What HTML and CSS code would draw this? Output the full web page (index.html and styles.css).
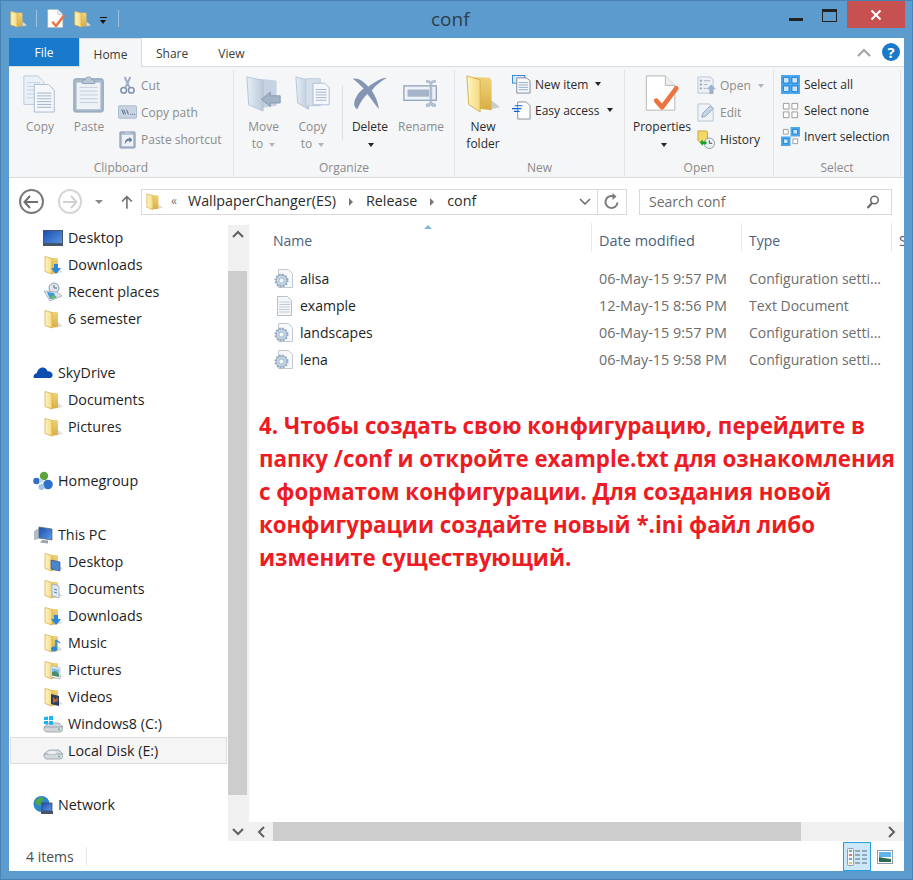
FILE: index.html
```html
<!DOCTYPE html>
<html lang="en">
<head>
    <meta charset="UTF-8">
    <meta name="viewport" content="width=device-width, initial-scale=1.0">
    <title>conf</title>
    <link rel="stylesheet" href="styles.css">
</head>
<body>

    <!-- Icon sheet -->
    <svg class="icon-sheet" xmlns="http://www.w3.org/2000/svg">
        <defs>
            <linearGradient id="flap" x1="0" y1="0" x2="1" y2="0"><stop offset="0" stop-color="#fff6c4"/><stop offset="1" stop-color="#f5d97f"/></linearGradient>
            <linearGradient id="back" x1="0" y1="0" x2="0" y2="1"><stop offset="0" stop-color="#f0d27a"/><stop offset="1" stop-color="#d9ae42"/></linearGradient>
            <linearGradient id="greyflap" x1="0" y1="0" x2="1" y2="0"><stop offset="0" stop-color="#e6edf5"/><stop offset="1" stop-color="#bccadb"/></linearGradient>
            <linearGradient id="screen" x1="0" y1="0" x2="1" y2="1"><stop offset="0" stop-color="#1c4fb0"/><stop offset="1" stop-color="#5d9be6"/></linearGradient>
        </defs>
        <symbol id="folder" viewBox="0 0 20 20">
            <path d="M15 13l5 4-5 1z" fill="#ddd"/>
            <path d="M5 3h9l1 1v14l-8 1z" fill="url(#back)"/>
            <path d="M2 1.500l7 2v15.500l-7-2.500z" fill="url(#flap)" stroke="#d6b04e" stroke-width=".8"/>
        </symbol>
        <symbol id="folder-down" viewBox="0 0 20 20">
            <use href="#folder"/>
            <path d="M11 9h4v4h3l-5 6-5-6h3z" fill="#2b87d8"/>
        </symbol>
        <symbol id="folder-desktop" viewBox="0 0 20 20">
            <use href="#folder"/>
            <path d="M8 8l9 2v9l-9-2z" fill="#4a86d0" stroke="#28538f" stroke-width=".7"/>
        </symbol>
        <symbol id="folder-docs" viewBox="0 0 20 20">
            <use href="#folder"/>
            <path d="M9 5l7 2v12l-7-2z" fill="#dfe8f2" stroke="#8fa3ba" stroke-width=".7"/>
            <path d="M11 10l3 1m-3 2l3 1" stroke="#5a7ea8"/>
        </symbol>
        <symbol id="folder-music" viewBox="0 0 20 20">
            <use href="#folder"/>
            <path d="M13 7v9" stroke="#2b87d8" stroke-width="1.600"/>
            <path d="M13 7l4 3" stroke="#2b87d8" stroke-width="1.200"/>
            <ellipse cx="11" cy="16" rx="3" ry="2.500" fill="#2b87d8"/>
        </symbol>
        <symbol id="folder-pics" viewBox="0 0 20 20">
            <use href="#folder"/>
            <path d="M8 6l9 2v11l-9-2z" fill="#e8f1f8" stroke="#a8b6c4" stroke-width=".7"/>
            <path d="M9 8l7 1.600v4l-7-1.600z" fill="#7cc0e8"/>
            <path d="M9 12l4-1 3 3v3l-7-1.500z" fill="#4d8a6b"/>
        </symbol>
        <symbol id="folder-videos" viewBox="0 0 20 20">
            <use href="#folder"/>
            <path d="M8 7l8 2v10l-8-2z" fill="#27405f"/>
            <path d="M10 10l4 4-4 2zM13 10l2 2-1 4z" fill="#d8662b"/>
        </symbol>
        <symbol id="recent" viewBox="0 0 20 20">
            <circle cx="11" cy="6" r="5" fill="#dfe6ee" stroke="#8b9aac"/>
            <path d="M11 3v3h3" fill="none" stroke="#5d6c7e"/>
            <path d="M1 9l13 1 5 4-12 5z" fill="#dce4ec" stroke="#94a2b2" stroke-width=".7"/>
            <path d="M4 10l7 1 2 5-6 1z" fill="#3f9bd0"/>
            <path d="M7 15l4-2 3 2-5 2z" fill="#6cb56a"/>
        </symbol>
        <symbol id="desktop" viewBox="0 0 20 20">
            <rect x=".5" y="2.500" width="19" height="15" fill="url(#screen)" stroke="#46566a"/>
            <rect x="1" y="15" width="18" height="2.500" fill="#46566a"/>
        </symbol>
        <symbol id="cloud" viewBox="0 0 20 20">
            <path d="M.5 14c0-2.200 1.500-3.700 3.300-3.700C4.600 6.500 7.300 4 10.500 4.600c2 .4 3.500 1.800 4.100 3.700 2.800-.4 5 1.500 5 3.800 0 1.700-1 2.900-2.300 2.900H3C1.500 15 .5 15 .5 14z" fill="#0c4fb0"/>
        </symbol>
        <symbol id="homegroup" viewBox="0 0 20 20">
            <circle cx="3.500" cy="10" r="3.300" fill="#2f6fc4"/>
            <circle cx="11" cy="5" r="4.200" fill="#5aa33f"/>
            <circle cx="15" cy="13.500" r="4.800" fill="#2d72c8"/>
            <circle cx="8.500" cy="16" r="3" fill="#9fc2e8"/>
            <circle cx="8" cy="10" r="2" fill="#c5d6e8"/>
        </symbol>
        <symbol id="pc" viewBox="0 0 20 20">
            <path d="M1 6l5-3v11l-5 1z" fill="#b5bcc6"/>
            <path d="M6 2l13 2v11L6 13z" fill="url(#screen)" stroke="#55606e" stroke-width=".7"/>
            <path d="M9 15l6 .6v3l-8-1z" fill="#9aa4b1"/>
        </symbol>
        <symbol id="drive-c" viewBox="0 0 20 20">
            <path d="M1 13l5-4h10l4 4v3l-2 2H3l-2-2z" fill="#cfd5da" stroke="#8d969f" stroke-width=".7"/>
            <path d="M1 13h19" stroke="#8d969f" stroke-width=".7"/>
            <circle cx="16" cy="15.500" r=".9" fill="#4fc04a"/>
            <path d="M1 3l4-.6v3.600H1zM6 2.300l4-.6V6H6zM1 7h4v3.500l-4-.5zM6 7h4v4l-4-.5z" fill="#19b5f0"/>
        </symbol>
        <symbol id="drive-e" viewBox="0 0 20 20">
            <path d="M1 13l5-4h10l4 4v3l-2 2H3l-2-2z" fill="#d5d9dd" stroke="#8d969f" stroke-width=".7"/>
            <path d="M1 13h19" stroke="#8d969f" stroke-width=".7"/>
            <ellipse cx="9" cy="11.500" rx="4.500" ry="1.500" fill="#eef0f2"/>
            <circle cx="16" cy="15.500" r=".9" fill="#4fc04a"/>
        </symbol>
        <symbol id="network" viewBox="0 0 20 20">
            <circle cx="8.500" cy="9" r="8" fill="#2e85c9"/>
            <path d="M3 5l5-3 3 2-3 3-1 4-4-2zM10 11l3 1-1 4-3-1z" fill="#55a83e"/>
            <rect x="9" y="8" width="10" height="8" fill="url(#screen)" stroke="#3a4658" stroke-width=".7"/>
            <path d="M8 16h12v3H8z" fill="#46566a"/>
        </symbol>
        <symbol id="file-ini" viewBox="0 0 20 20">
            <path d="M4.500 .5h10l4 4v14h-14z" fill="#f6f8fa" stroke="#c3c9d0"/>
            <circle cx="7.500" cy="11.500" r="5.500" fill="#c5d5e6" stroke="#8aa2bb"/>
            <circle cx="7.500" cy="11.500" r="2.600" fill="#f5f8fb" stroke="#8aa2bb" stroke-width=".7"/>
            <circle cx="7.500" cy="11.500" r="6.300" fill="none" stroke="#8aa2bb" stroke-width="1.400" stroke-dasharray="1.600 1.700"/>
        </symbol>
        <symbol id="file-txt" viewBox="0 0 20 20">
            <path d="M3.500 .5h10l4 4v15h-14z" fill="#f4f6f8" stroke="#b9c0c8"/>
            <path d="M5 6h11M5 8.500h11M5 11h11M5 13.500h11M5 16h11" stroke="#c3ccd6"/>
        </symbol>

        <!-- ribbon, large -->
        <symbol id="r-copy" viewBox="0 0 36 40">
            <path d="M1 1h15l6 6v24H1z" fill="#e9f0f7" stroke="#bccbdc"/>
            <path d="M4 8h14M4 12h14M4 16h14M4 20h14M4 24h14" stroke="#c6d3e2"/>
            <path d="M12 10h15l6 6v23H12z" fill="#f4f7fb" stroke="#a9bbd0"/>
            <path d="M15 19h15M15 22h15M15 25h15M15 28h15M15 31h15M15 34h15" stroke="#9fb0c5"/>
        </symbol>
        <symbol id="r-paste" viewBox="0 0 36 40">
            <rect x="2" y="4" width="31" height="35" rx="2" fill="#a9b8ca" stroke="#8a9bb0"/>
            <rect x="5" y="8" width="25" height="28" fill="#eef2f7"/>
            <path d="M8 13h19M8 17h19M8 21h19M8 25h19M8 29h19" stroke="#c0ccda"/>
            <path d="M11 7c0-2 3-2 3-2 0-4 7-4 7 0 0 0 3 0 3 2v2H11z" fill="#b9c6d6" stroke="#8a9bb0"/>
        </symbol>
        <symbol id="r-move" viewBox="0 0 40 40">
            <path d="M14 3l20 2v28l-20 3z" fill="#c6d2e2"/>
            <path d="M1 1l18 4v34L3 32z" fill="url(#greyflap)" stroke="#b4c2d4"/>
            <path d="M17 26l10-8v4h11v8H27v4z" fill="#a3b2c6" stroke="#8497ae"/>
        </symbol>
        <symbol id="r-copyto" viewBox="0 0 40 40">
            <path d="M1 1l14 4v32L3 30z" fill="url(#greyflap)" stroke="#b4c2d4"/>
            <path d="M12 3h16v30H12z" fill="#d4dee9" stroke="#bccbdc"/>
            <path d="M20 8h13l5 5v19H20z" fill="#f4f7fb" stroke="#a9bbd0"/>
            <path d="M23 15h12M23 18h12M23 21h12M23 24h12M23 27h12" stroke="#9fb0c5"/>
        </symbol>
        <symbol id="r-delete" viewBox="0 0 40 38">
            <path d="M1 2c6-1 12 3 17 9C25 6 32 1 39 1c-6 3-13 9-17 14 4 6 7 13 8 21-5-6-9-12-13-17C11 25 8 31 6 36 2 34 1 28 5 22c2-4 5-7 8-9C9 9 5 5 1 2z" fill="#8495b3"/>
        </symbol>
        <symbol id="r-rename" viewBox="0 0 40 32">
            <rect x="1" y="7" width="36" height="16" fill="#eef3f9" stroke="#92a5bd" stroke-width="1.500"/>
            <rect x="5" y="11" width="24" height="8" fill="#a5b4c8"/>
            <path d="M26 1c3 0 4 0 5 2 1-2 2-2 5-2v2c-3 0-4 1-4 2v20c0 1 1 2 4 2v3c-3 0-4 0-5-2-1 2-2 2-5 2v-3c3 0 4-1 4-2V5c0-1-1-2-4-2z" fill="#b7c4d5" stroke="#8fa2ba" stroke-width=".6"/>
        </symbol>
        <symbol id="r-newfolder" viewBox="0 0 36 40">
            <path d="M26 26l10 8-10 2z" fill="#ccc"/>
            <path d="M8 2l17 1 2 3v31l-17-2z" fill="url(#back)"/>
            <path d="M1 1l14 4v34L3 31z" fill="url(#flap)" stroke="#d6b04e"/>
        </symbol>
        <symbol id="r-props" viewBox="0 0 36 40">
            <path d="M1.500 1h20l10 10v26h-30z" fill="#fff" stroke="#b5b5b5"/>
            <path d="M21.500 1v10h10" fill="#eee" stroke="#b5b5b5"/>
            <path d="M12 27l6 7 15-20" fill="none" stroke="#ed7441" stroke-width="5" stroke-linecap="round" stroke-linejoin="round"/>
        </symbol>

        <!-- ribbon, small -->
        <symbol id="s-cut" viewBox="0 0 18 20">
            <path d="M6 1l5 11M12 1L7 12" stroke="#9fb0c5" stroke-width="2.200" fill="none"/>
            <circle cx="5" cy="15" r="3" fill="none" stroke="#7f93ad" stroke-width="1.600"/>
            <circle cx="13" cy="15" r="3" fill="none" stroke="#7f93ad" stroke-width="1.600"/>
        </symbol>
        <symbol id="s-path" viewBox="0 0 20 16">
            <rect x=".5" y="1" width="19" height="13" rx="1" fill="#c9d4e3" stroke="#a8b8cc"/>
            <path d="M4 5l2 5M6 5l2 5M9 5l2 5" stroke="#55657c" fill="none"/>
            <path d="M13 10h1M15 10h1M17 10h1" stroke="#55657c"/>
        </symbol>
        <symbol id="s-pasteshort" viewBox="0 0 18 20">
            <rect x="1" y="2" width="16" height="17" rx="1" fill="#a9b8ca" stroke="#8a9bb0"/>
            <rect x="3" y="5" width="12" height="12" fill="#eef2f7"/>
            <path d="M6 2h6v3H6z" fill="#b9c6d6"/>
            <path d="M6 15c0-4 2-6 5-6V7l3 3.500-3 3V11c-2 0-3 1-5 4z" fill="#5f7594"/>
        </symbol>
        <symbol id="s-newitem" viewBox="0 0 20 20">
            <rect x=".5" y=".5" width="13" height="8" fill="#dceafa" stroke="#2e86de"/>
            <path d="M5 3h10l4 3v13H5z" fill="#f7f9fb" stroke="#7c8a99"/>
            <path d="M7 8h10M7 10.500h10M7 13h10M7 15.500h10" stroke="#8fa9c4"/>
        </symbol>
        <symbol id="s-easy" viewBox="0 0 20 20">
            <path d="M6 1h9l4 4v14H6z" fill="#fdfdfd" stroke="#8a8f96"/>
            <path d="M3 5h8M0 8h10M2 11h6" stroke="#0a63d6" stroke-width="1.300"/>
        </symbol>
        <symbol id="s-open" viewBox="0 0 20 20">
            <path d="M1 1h13l3 3v14H1z" fill="#eef2f7" stroke="#b7c4d5"/>
            <path d="M3 4h2v2H3zM3 8h2v2H3zM3 12h2v2H3z" fill="#8aa0bb"/>
            <path d="M7 5h7M7 9h4M7 13h3" stroke="#9fb0c5"/>
            <path d="M10 14l5-5 5 5h-3v5h-4v-5z" fill="#9db1ca"/>
        </symbol>
        <symbol id="s-edit" viewBox="0 0 20 20">
            <path d="M1 1h12l4 4v14H1z" fill="#f0f4f9" stroke="#b7c4d5"/>
            <path d="M5 15l1-4 8-8 3 3-8 8z" fill="#c6d6e9" stroke="#8ea3bd"/>
        </symbol>
        <symbol id="s-history" viewBox="0 0 20 20">
            <path d="M1 1h9l1 1v12H4l-3-3z" fill="#f4d766" stroke="#c9a53c"/>
            <circle cx="13" cy="14" r="5.500" fill="#eef1f4" stroke="#8e98a3"/>
            <path d="M13 11v3h3" fill="none" stroke="#444"/>
            <path d="M3 13l3-3v2h4v3H6v2z" fill="#17a126"/>
        </symbol>
        <symbol id="s-all" viewBox="0 0 20 20">
            <rect width="20" height="20" fill="#4aa7f0"/>
            <path d="M2.500 2.500h6v6h-6zM11.500 2.500h6v6h-6zM2.500 11.500h6v6h-6zM11.500 11.500h6v6h-6z" fill="#cbe6fb" stroke="#1a7fd0"/>
        </symbol>
        <symbol id="s-none" viewBox="0 0 20 20">
            <path d="M2.500 2.500h6v6h-6zM11.500 2.500h6v6h-6zM2.500 11.500h6v6h-6zM11.500 11.500h6v6h-6z" fill="#fff" stroke="#9a9a9a"/>
        </symbol>
        <symbol id="s-invert" viewBox="0 0 20 20">
            <path d="M10 0h10v10H10zM0 10h10v10H0z" fill="#4aa7f0"/>
            <path d="M12.500 2.500h5v5h-5zM2.500 12.500h5v5h-5z" fill="#cbe6fb" stroke="#1a7fd0"/>
            <path d="M2.500 2.500h5v5h-5zM12.500 12.500h5v5h-5z" fill="#fff" stroke="#9a9a9a"/>
        </symbol>
    </svg>

    <div class="window">

        <!-- Title bar -->
        <header class="titlebar">
            <div class="qat">
                <svg class="ico-tree"><use href="#folder"/></svg>
                <span class="qat-sep"></span>
                <svg class="ico-tree"><use href="#r-props"/></svg>
                <svg class="ico-tree"><use href="#folder"/></svg>
                <span class="qat-drop"></span>
                <span class="qat-sep"></span>
            </div>
            <h1 class="title">conf</h1>
            <div class="win-controls">
                <span class="win-min"></span>
                <span class="win-max"></span>
                <span class="win-close">
                    <svg width="12" height="12" viewBox="0 0 12 12"><path d="M1.500 1.500l9 9M10.500 1.500l-9 9" stroke="#fff" stroke-width="2"/></svg>
                </span>
            </div>
        </header>

        <div class="content">

            <!-- Ribbon tabs -->
            <nav class="tabs">
                <span class="tab-file">File</span>
                <span class="tab tab-active">Home</span>
                <span class="tab tab-share">Share</span>
                <span class="tab tab-view">View</span>
                <span class="tabs-right">
                    <svg width="14" height="9" viewBox="0 0 14 9"><path d="M1 8l6-6 6 6" fill="none" stroke="#a5a5a5" stroke-width="2.200"/></svg>
                    <span class="help">?</span>
                </span>
            </nav>

            <!-- Ribbon -->
            <section class="ribbon">

                <div class="group group-clipboard">
                    <div class="group-body">
                        <div class="big off btn-copy"><svg class="ico-big"><use href="#r-copy"/></svg><span>Copy</span></div>
                        <div class="big off btn-paste"><svg class="ico-big"><use href="#r-paste"/></svg><span>Paste</span></div>
                        <div class="small-col">
                            <div class="small off"><svg class="ico-small"><use href="#s-cut"/></svg>Cut</div>
                            <div class="small off"><svg class="ico-small"><use href="#s-path"/></svg>Copy path</div>
                            <div class="small off"><svg class="ico-small"><use href="#s-pasteshort"/></svg>Paste shortcut</div>
                        </div>
                    </div>
                    <div class="group-label">Clipboard</div>
                </div>

                <div class="group group-organize">
                    <div class="group-body">
                        <div class="big off btn-move"><svg class="ico-big"><use href="#r-move"/></svg><span>Move<br>to <i class="caret caret-off"></i></span></div>
                        <div class="big off btn-move"><svg class="ico-big"><use href="#r-copyto"/></svg><span>Copy<br>to <i class="caret caret-off"></i></span></div>
                        <div class="divider"></div>
                        <div class="big btn-delete"><svg class="ico-big"><use href="#r-delete"/></svg><span>Delete<br><i class="caret"></i></span></div>
                        <div class="big off btn-rename"><svg class="ico-big"><use href="#r-rename"/></svg><span>Rename</span></div>
                    </div>
                    <div class="group-label">Organize</div>
                </div>

                <div class="group group-new">
                    <div class="group-body">
                        <div class="big btn-newfolder"><svg class="ico-big"><use href="#r-newfolder"/></svg><span>New<br>folder</span></div>
                        <div class="small-col tight">
                            <div class="small"><svg class="ico-small"><use href="#s-newitem"/></svg>New item <i class="caret"></i></div>
                            <div class="small"><svg class="ico-small"><use href="#s-easy"/></svg>Easy access <i class="caret"></i></div>
                        </div>
                    </div>
                    <div class="group-label">New</div>
                </div>

                <div class="group group-open">
                    <div class="group-body">
                        <div class="big btn-props"><svg class="ico-big"><use href="#r-props"/></svg><span>Properties<br><i class="caret"></i></span></div>
                        <div class="small-col">
                            <div class="small off"><svg class="ico-small"><use href="#s-open"/></svg>Open <i class="caret caret-off"></i></div>
                            <div class="small off"><svg class="ico-small"><use href="#s-edit"/></svg>Edit</div>
                            <div class="small"><svg class="ico-small"><use href="#s-history"/></svg>History</div>
                        </div>
                    </div>
                    <div class="group-label">Open</div>
                </div>

                <div class="group group-select">
                    <div class="group-body">
                        <div class="small-col tight">
                            <div class="small"><svg class="ico-small"><use href="#s-all"/></svg>Select all</div>
                            <div class="small"><svg class="ico-small"><use href="#s-none"/></svg>Select none</div>
                            <div class="small"><svg class="ico-small"><use href="#s-invert"/></svg>Invert selection</div>
                        </div>
                    </div>
                    <div class="group-label">Select</div>
                </div>
            </section>

            <!-- Navigation bar -->
            <div class="navbar">
                <span class="nav-circle">
                    <svg width="16" height="14" viewBox="0 0 16 14"><path d="M7 1L1.500 7 7 13M2 7h13" fill="none" stroke="#6e6e6e" stroke-width="2"/></svg>
                </span>
                <span class="nav-circle nav-off">
                    <svg width="16" height="14" viewBox="0 0 16 14"><path d="M9 1l5.500 6L9 13M14 7H1" fill="none" stroke="#d0d0d0" stroke-width="2"/></svg>
                </span>
                <span class="nav-drop"></span>
                <svg class="nav-up" width="12" height="14" viewBox="0 0 12 14"><path d="M1 6.500L6 1.500l5 5M6 2v12" fill="none" stroke="#6e6e6e" stroke-width="1.600"/></svg>
                <div class="address">
                    <svg class="ico-addr"><use href="#folder"/></svg>
                    <span class="crumb-more">«</span>
                    <span class="crumb">WallpaperChanger(ES)</span>
                    <i class="crumb-arrow"></i>
                    <span class="crumb">Release</span>
                    <i class="crumb-arrow"></i>
                    <span class="crumb">conf</span>
                    <svg class="addr-chevron" width="12" height="7" viewBox="0 0 12 7"><path d="M1 1l5 5 5-5" fill="none" stroke="#6a6a6a" stroke-width="1.500"/></svg>
                    <span class="addr-refresh">
                        <svg width="16" height="17" viewBox="0 0 16 17"><path d="M13.500 9.500a6 6 0 1 1-4-6.200" fill="none" stroke="#7a7a7a" stroke-width="2"/><path d="M8.500 0v7l4-3.500z" fill="#7a7a7a"/></svg>
                    </span>
                </div>
                <div class="search">
                    <span>Search conf</span>
                    <svg width="14" height="14" viewBox="0 0 14 14"><circle cx="8.500" cy="5" r="3.800" fill="none" stroke="#6a6a6a" stroke-width="1.500"/><path d="M6 8l-4.500 5" stroke="#6a6a6a" stroke-width="2.200"/></svg>
                </div>
            </div>

            <!-- Main area -->
            <div class="main">
                <aside class="sidebar">
                    <ul class="tree">
                        <li class="sub"><svg class="ico-tree"><use href="#desktop"/></svg>Desktop</li>
                        <li class="sub"><svg class="ico-tree"><use href="#folder-down"/></svg>Downloads</li>
                        <li class="sub"><svg class="ico-tree"><use href="#recent"/></svg>Recent places</li>
                        <li class="sub"><svg class="ico-tree"><use href="#folder"/></svg>6 semester</li>
                        <li class="gap"></li>
                        <li><svg class="ico-tree"><use href="#cloud"/></svg>SkyDrive</li>
                        <li class="sub"><svg class="ico-tree"><use href="#folder"/></svg>Documents</li>
                        <li class="sub"><svg class="ico-tree"><use href="#folder"/></svg>Pictures</li>
                        <li class="gap"></li>
                        <li><svg class="ico-tree"><use href="#homegroup"/></svg>Homegroup</li>
                        <li class="gap"></li>
                        <li><svg class="ico-tree"><use href="#pc"/></svg>This PC</li>
                        <li class="sub"><svg class="ico-tree"><use href="#folder-desktop"/></svg>Desktop</li>
                        <li class="sub"><svg class="ico-tree"><use href="#folder-docs"/></svg>Documents</li>
                        <li class="sub"><svg class="ico-tree"><use href="#folder-down"/></svg>Downloads</li>
                        <li class="sub"><svg class="ico-tree"><use href="#folder-music"/></svg>Music</li>
                        <li class="sub"><svg class="ico-tree"><use href="#folder-pics"/></svg>Pictures</li>
                        <li class="sub"><svg class="ico-tree"><use href="#folder-videos"/></svg>Videos</li>
                        <li class="sub"><svg class="ico-tree"><use href="#drive-c"/></svg>Windows8 (C:)</li>
                        <li class="sub selected"><svg class="ico-tree"><use href="#drive-e"/></svg>Local Disk (E:)</li>
                        <li class="gap"></li>
                        <li><svg class="ico-tree"><use href="#network"/></svg>Network</li>
                    </ul>
                </aside>

                <div class="vscroll">
                    <span class="sb-btn"><svg width="12" height="8" viewBox="0 0 12 8"><path d="M1 7l5-5 5 5" fill="none" stroke="#606060" stroke-width="2"/></svg></span>
                    <span class="vscroll-thumb"></span>
                    <span class="sb-btn"><svg width="12" height="8" viewBox="0 0 12 8"><path d="M1 1l5 5 5-5" fill="none" stroke="#606060" stroke-width="2"/></svg></span>
                </div>

                <div class="pane">
                    <div class="files">
                        <div class="file-head">
                            <span class="col-name">Name<i class="sort-arrow"></i></span>
                            <span class="col-date">Date modified</span>
                            <span class="col-type">Type</span>
                            <span class="col-size">S</span>
                        </div>
                        <div class="file-row">
                            <span class="col-name"><svg class="ico-file"><use href="#file-ini"/></svg>alisa</span>
                            <span class="col-date">06-May-15 9:57 PM</span>
                            <span class="col-type">Configuration setti...</span>
                        </div>
                        <div class="file-row">
                            <span class="col-name"><svg class="ico-file"><use href="#file-txt"/></svg>example</span>
                            <span class="col-date">12-May-15 8:56 PM</span>
                            <span class="col-type">Text Document</span>
                        </div>
                        <div class="file-row">
                            <span class="col-name"><svg class="ico-file"><use href="#file-ini"/></svg>landscapes</span>
                            <span class="col-date">06-May-15 9:57 PM</span>
                            <span class="col-type">Configuration setti...</span>
                        </div>
                        <div class="file-row">
                            <span class="col-name"><svg class="ico-file"><use href="#file-ini"/></svg>lena</span>
                            <span class="col-date">06-May-15 9:58 PM</span>
                            <span class="col-type">Configuration setti...</span>
                        </div>

                        <p class="note">4. Чтобы создать свою конфигурацию, перейдите в папку /conf и откройте example.txt для ознакомления с форматом конфигурации. Для создания новой конфигурации создайте новый *.ini файл либо измените существующий.</p>
                    </div>

                    <div class="hscroll">
                        <span class="sb-btn"><svg width="8" height="12" viewBox="0 0 8 12"><path d="M7 1L2 6l5 5" fill="none" stroke="#606060" stroke-width="2"/></svg></span>
                        <span class="hscroll-thumb"></span>
                        <span class="sb-btn"><svg width="8" height="12" viewBox="0 0 8 12"><path d="M1 1l5 5-5 5" fill="none" stroke="#606060" stroke-width="2"/></svg></span>
                    </div>
                </div>
            </div>

            <!-- Status bar -->
            <footer class="statusbar">
                <span class="status-count">4 items</span>
                <div class="view-btns">
                    <span class="view-btn view-on">
                        <svg width="20" height="18" viewBox="0 0 20 18">
                            <rect x=".5" y=".5" width="6" height="17" rx="1" fill="#f2f4f6" stroke="#8e9cab"/>
                            <path d="M2 3h3" stroke="#4aa54a" stroke-width="1.500"/><path d="M2 7h3" stroke="#d84c4c" stroke-width="1.500"/><path d="M2 11h3" stroke="#4a7fd0" stroke-width="1.500"/><path d="M2 15h3" stroke="#c8c83a" stroke-width="1.500"/>
                            <path d="M8 3h5M15 3h5M8 7h5M15 7h5M8 11h5M15 11h5M8 15h5M15 15h5" stroke="#5a6a78"/>
                        </svg>
                    </span>
                    <span class="view-btn">
                        <svg width="16" height="14" viewBox="0 0 16 14">
                            <rect x=".5" y=".5" width="15" height="13" fill="#fff" stroke="#8e9cab"/>
                            <rect x="2" y="2" width="12" height="5" fill="#5fb4ea"/>
                            <path d="M2 7l5 1 7 1v3H2z" fill="#2d6b4f"/>
                        </svg>
                    </span>
                </div>
            </footer>
        </div>
    </div>

</body>
</html>
```

FILE: styles.css
```css
* {
    box-sizing: border-box;
}

body {
    margin: 0;
    font-family: "Open Sans", "Noto Sans", sans-serif;
    font-size: 14px;
    color: #1e1e1e;
}

/* only holds the symbols, takes no room on the page */
.icon-sheet {
    position: absolute;
    width: 0;
    height: 0;
}

.window {
    width: 913px;
    height: 880px;
    display: flex;
    flex-direction: column;
    padding: 0 8px 8px;
    background: #5c9bce;
    border: 1px solid #4a83b2;
    overflow: hidden;
}

/* Title bar */
.titlebar {
    height: 37px;
    flex: none;
    display: flex;
    align-items: flex-start;
}

.qat {
    display: flex;
    align-items: center;
    height: 37px;
    width: 300px;
    padding-bottom: 2px;
}

.qat .ico-tree {
    width: 18px;
    height: 20px;
    margin-right: 8px;
}

.qat-sep {
    width: 1px;
    height: 17px;
    background: #9dc1de;
    margin: 0 10px 0 1px;
}

.qat-drop {
    width: 7px;
    height: 6px;
    margin: 2px 10px 0 1px;
    border-top: 1px solid #111;
    position: relative;
}

.qat-drop::after {
    content: "";
    position: absolute;
    left: 0;
    top: 2px;
    border: 3.500px solid transparent;
    border-top: 4px solid #111;
    border-bottom: 0;
}

.title {
    flex: 1;
    margin: 0;
    padding: 5px 0 0 122px;
    font-size: 19px;
    font-weight: 400;
    line-height: 26px;
    color: #2f3d4a;
}

.win-controls {
    display: flex;
    align-items: flex-start;
    margin-right: -1px;
}

.win-min {
    width: 14px;
    height: 3px;
    margin: 17px 19px 0 0;
    background: #222;
}

.win-max {
    width: 15px;
    height: 13px;
    margin: 8px 10px 0 0;
    border: 1px solid #222;
    border-top-width: 3px;
}

.win-close {
    width: 58px;
    height: 27px;
    background: #c75050;
    display: flex;
    align-items: center;
    justify-content: center;
}

.content {
    flex: 1;
    min-height: 0;
    display: flex;
    flex-direction: column;
    background: #fff;
}

/* Ribbon tabs */
.tabs {
    height: 29px;
    flex: none;
    display: flex;
    align-items: stretch;
    font-size: 12px;
    color: #3b3b3b;
    border-bottom: 1px solid #dadbdc;
}

.tab-file {
    width: 70px;
    background: #1979ca;
    color: #fff;
    display: flex;
    align-items: center;
    justify-content: center;
}

.tab {
    display: flex;
    align-items: center;
    padding-top: 3px;
}

.tab-active {
    width: 63px;
    justify-content: center;
    background: #f5f6f7;
    border: 1px solid #dadbdc;
    border-bottom: 0;
    margin-bottom: -1px;
}

.tab-share {
    margin-left: 14px;
}

.tab-view {
    margin-left: 30px;
}

.tabs-right {
    margin-left: auto;
    display: flex;
    align-items: center;
    gap: 11px;
    padding: 0 4px 0 0;
}

.help {
    width: 18px;
    height: 18px;
    border-radius: 50%;
    background: #1979ca;
    color: #fff;
    font-weight: 700;
    font-size: 15px;
    line-height: 18px;
    text-align: center;
}

/* Ribbon */
.ribbon {
    height: 111px;
    flex: none;
    display: flex;
    background: #f5f6f7;
    border-bottom: 1px solid #dadbdc;
    font-size: 12px;
    color: #2b2b2b;
    padding-top: 3px;
}

.group {
    display: flex;
    flex-direction: column;
    border-right: 1px solid #e2e3e4;
    margin-bottom: 1px;
}

.group-body {
    flex: 1;
    display: flex;
    align-items: flex-start;
}

.group-label {
    height: 16px;
    text-align: center;
    line-height: 16px;
    color: #8a8a8a;
}

.group-clipboard { width: 225px; }
.group-organize { width: 221px; }
.group-new { width: 170px; }
.group-open { width: 149px; }
.group-select { width: 127px; }

.group-clipboard .group-body { padding-left: 8px; }
.group-organize .group-body { padding-left: 5px; }
.group-new .group-body { padding-left: 3px; }
.group-open .group-body { padding-left: 4px; }
.group-select .group-body { padding-left: 7px; }

.big {
    display: flex;
    flex-direction: column;
    align-items: center;
    text-align: center;
    line-height: 17px;
    padding-top: 5px;
}

.big span {
    white-space: nowrap;
    margin-top: 5px;
}

.ico-big {
    width: 36px;
    height: 38px;
}

.off {
    color: #8c8c8c;
}

.btn-copy { width: 46px; }
.btn-paste { width: 52px; }
.btn-move { width: 49px; }
.btn-delete { width: 50px; margin-left: 2px; }
.btn-rename { width: 52px; }
.btn-newfolder { width: 50px; }
.btn-props { width: 66px; }

.divider {
    width: 1px;
    height: 55px;
    margin: 15px 0 0 5px;
    background: #dfe0e1;
}

.small-col {
    display: flex;
    flex-direction: column;
    padding-top: 2px;
    margin-left: 3px;
}

.group-new .small-col {
    margin-left: 4px;
}

.group-open .small-col {
    margin-left: 2px;
}

.group-select .small-col {
    margin-left: 0;
}

.small {
    height: 27px;
    display: flex;
    align-items: center;
    white-space: nowrap;
}

.small .caret {
    margin-left: 7px;
}

.tight {
    padding-top: 1px;
}

.tight .small {
    height: 26px;
}

.ico-small {
    width: 19px;
    height: 19px;
    margin-right: 4px;
    flex: none;
}

.caret {
    display: inline-block;
    vertical-align: middle;
    margin-left: 3px;
    border: 3.500px solid transparent;
    border-top: 4px solid #222;
    border-bottom: 0;
}

.caret-off {
    border-top-color: #b5b5b5;
}

/* Navigation bar */
.navbar {
    height: 45px;
    flex: none;
    display: flex;
    align-items: center;
    padding: 2px 12px 0 10px;
    color: #2b2b2b;
}

.nav-circle {
    width: 25px;
    height: 25px;
    border: 2px solid #7a7a7a;
    border-radius: 50%;
    display: flex;
    align-items: center;
    justify-content: center;
    margin-right: 14px;
}

.nav-off {
    border-color: #d6d6d6;
    margin-right: 13px;
}

.nav-drop {
    border: 4px solid transparent;
    border-top: 4px solid #8a8a8a;
    border-bottom: 0;
    margin-right: 18px;
}

.nav-up {
    margin-right: 8px;
}

.address {
    width: 486px;
    height: 26px;
    flex: none;
    display: flex;
    align-items: center;
    border: 1px solid #d9d9d9;
    padding-left: 3px;
    font-size: 14.300px;
}

.crumb {
    padding-bottom: 2px;
}

.ico-addr {
    width: 18px;
    height: 19px;
}

.crumb-more {
    margin: 0 11px 2px 8px;
    color: #777;
    font-size: 12px;
}

.crumb-arrow {
    margin: 0 13px;
    border: 4px solid transparent;
    border-left: 4px solid #777;
    border-right: 0;
}

.addr-chevron {
    margin-left: auto;
    margin-right: 6px;
}

.addr-refresh {
    width: 29px;
    height: 24px;
    border-left: 1px solid #d9d9d9;
    display: flex;
    align-items: center;
    justify-content: center;
}

.search {
    width: 253px;
    height: 26px;
    flex: none;
    margin-left: 12px;
    display: flex;
    align-items: center;
    justify-content: space-between;
    border: 1px solid #d9d9d9;
    padding: 0 11px 0 9px;
    color: #6d6d6d;
}

/* Main area */
.main {
    flex: 1;
    min-height: 0;
    display: flex;
}

.sidebar {
    width: 219px;
    flex: none;
    padding: 1px 1px 0;
    font-size: 14.300px;
}

.tree {
    list-style: none;
    margin: 0;
    padding: 0;
}

.tree li {
    height: 27px;
    display: flex;
    align-items: center;
    gap: 5px;
    padding-left: 23px;
}

.tree li.sub {
    padding-left: 33px;
}

.tree li.selected {
    background: #f5f5f5;
    border: 1px solid #dedede;
    padding-left: 32px;
}

.ico-tree {
    width: 20px;
    height: 20px;
    flex: none;
}

.vscroll {
    width: 19px;
    flex: none;
    display: flex;
    flex-direction: column;
    background: #f0f0f0;
    margin-top: 2px;
    margin-bottom: 1px;
}

.sb-btn {
    flex: none;
    display: flex;
    align-items: center;
    justify-content: center;
}

.vscroll .sb-btn:first-child {
    height: 46px;
    align-items: flex-start;
    padding-top: 5px;
}

.vscroll .sb-btn:last-child {
    height: 46px;
    align-items: flex-end;
    padding-bottom: 5px;
}

.vscroll-thumb {
    flex: 1;
    background: #cdcdcd;
}

.pane {
    flex: 1;
    min-width: 0;
    display: flex;
    flex-direction: column;
    border-left: 2px solid #f2f2f2;
}

.files {
    flex: 1;
    min-height: 0;
    padding-left: 24px;
    overflow: hidden;
}

.file-head,
.file-row {
    display: flex;
    white-space: nowrap;
}

.file-head {
    height: 35px;
    margin-bottom: 7px;
    align-items: flex-start;
    line-height: 35px;
    color: #4c607a;
}

.file-head .col-date,
.file-head .col-type,
.file-head .col-size {
    height: 29px;
    border-left: 1px solid #e4ebf2;
    padding-left: 7px;
}

.file-head .col-date {
    font-size: 14.500px;
}

.col-name {
    width: 318px;
    flex: none;
    position: relative;
    display: flex;
    align-items: center;
}

.file-head .col-name {
    height: 35px;
}

.col-date {
    width: 150px;
    flex: none;
}

.col-type {
    width: 150px;
    flex: none;
}

.col-size {
    flex: none;
}

.file-row {
    height: 27px;
    align-items: center;
    color: #6d6d6d;
}

.file-row .col-date {
    padding-left: 8px;
    font-size: 14.400px;
}

.file-row .col-type {
    padding-left: 8px;
}

.file-row .col-name {
    color: #1e1e1e;
}

.ico-file {
    width: 20px;
    height: 20px;
    margin: 0 6px 0 1px;
}

.sort-arrow {
    position: absolute;
    left: 151px;
    top: 2px;
    border: 4.500px solid transparent;
    border-bottom: 4px solid #7fb6dc;
    border-top: 0;
}

.note {
    margin: 36px 0 0 -14px;
    width: 640px;
    font-size: 22.300px;
    font-weight: 700;
    line-height: 33px;
    color: #ed1c24;
}

.hscroll {
    height: 19px;
    flex: none;
    display: flex;
    background: #f0f0f0;
    margin-bottom: 1px;
}

.hscroll .sb-btn {
    width: 24px;
}

.hscroll .sb-btn:last-child {
    width: 103px;
    justify-content: flex-end;
    padding-right: 8px;
}

.hscroll-thumb {
    flex: 1;
    background: #cdcdcd;
}

/* Status bar */
.statusbar {
    height: 29px;
    flex: none;
    display: flex;
    align-items: center;
    justify-content: space-between;
    color: #4b4b4b;
    padding-left: 17px;
}

.status-count {
    padding-right: 12px;
    border-right: 1px solid #e8e8e8;
}

.view-btns {
    display: flex;
    height: 29px;
    padding-right: 5px;
}

.view-btn {
    width: 28px;
    display: flex;
    align-items: center;
    justify-content: center;
}

.view-on {
    background: #cce8f8;
    border: 1px solid #26a0da;
}
```
